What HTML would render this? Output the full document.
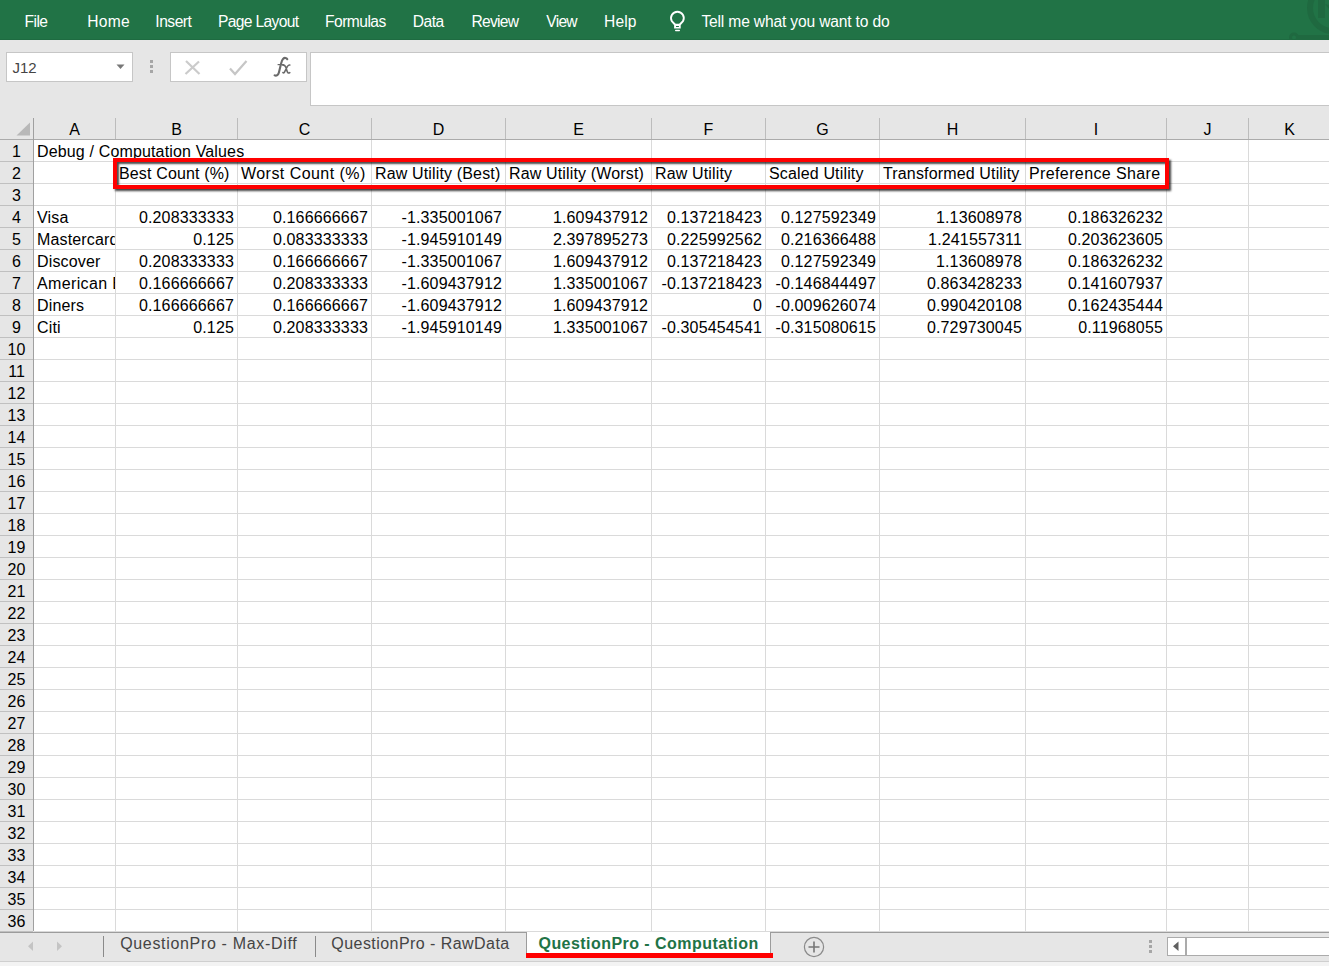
<!DOCTYPE html><html><head><meta charset="utf-8"><style>
html,body{margin:0;padding:0;}
body{width:1329px;height:966px;overflow:hidden;position:relative;background:#e6e6e6;font-family:"Liberation Sans",sans-serif;}
.a{position:absolute;white-space:nowrap;}
.rt{position:absolute;white-space:nowrap;color:#fff;font-size:15.6px;line-height:20px;top:11.5px;}
.c{position:absolute;white-space:nowrap;font-size:16px;line-height:22px;color:#000;height:22px;overflow:hidden;letter-spacing:0.15px;}
.ch{position:absolute;font-size:16px;line-height:21px;color:#000;text-align:center;top:119px;height:21px;padding-left:1px;box-sizing:border-box;}
.rh{position:absolute;font-size:16px;line-height:22px;color:#000;text-align:center;left:0;width:33px;}
</style></head><body>

<div class="a" style="left:0;top:0;width:1329px;height:40px;background:#217346;"></div>
<div class="a" style="left:0;top:39px;width:1329px;height:1px;background:#1e6b41;"></div>
<div class="rt" style="left:24.5px;letter-spacing:-0.53px;">File</div>
<div class="rt" style="left:87.3px;letter-spacing:0.27px;">Home</div>
<div class="rt" style="left:155.3px;letter-spacing:-0.48px;">Insert</div>
<div class="rt" style="left:218.1px;letter-spacing:-0.66px;">Page Layout</div>
<div class="rt" style="left:325.1px;letter-spacing:-0.54px;">Formulas</div>
<div class="rt" style="left:412.8px;letter-spacing:-0.53px;">Data</div>
<div class="rt" style="left:471.4px;letter-spacing:-0.72px;">Review</div>
<div class="rt" style="left:546.3px;letter-spacing:-0.73px;">View</div>
<div class="rt" style="left:604.1px;letter-spacing:0.07px;">Help</div>
<div class="rt" style="left:701.4px;letter-spacing:-0.16px;">Tell me what you want to do</div>
<svg class="a" style="left:660px;top:5px;" width="40" height="30" viewBox="660 5 40 30"><path d="M674.9 24.5 L671.8 21.1 A6.35 6.35 0 1 1 683.0 21.1 L679.9 24.5" fill="none" stroke="#fff" stroke-width="1.9" stroke-linejoin="round"/><path d="M674.1 23.8 H680.7 V28.6 H674.1 Z M676 25.9 V26.9 H678.9 V25.9 Z" fill="#fff" fill-rule="evenodd"/><rect x="675" y="29.7" width="5" height="1.5" rx="0.7" fill="#fff"/></svg>
<svg class="a" style="left:1280px;top:0px;" width="49" height="40" viewBox="1280 0 49 40"><circle cx="1333" cy="8" r="23" fill="none" stroke="#1f6940" stroke-width="6"/><rect x="1318" y="0" width="7" height="18" fill="#1f6940"/><path d="M1325 4 L1333 14 L1333 6 Z" fill="#1f6940"/><circle cx="1294" cy="37.5" r="3.5" fill="none" stroke="#1f6940" stroke-width="3"/><rect x="1297" y="35" width="32" height="5" fill="#1f6940"/></svg>
<div class="a" style="left:6px;top:52px;width:125px;height:28px;border:1px solid #c6c6c6;background:#fff;"></div>
<div class="a" style="left:12.5px;top:57.5px;font-size:15px;line-height:20px;color:#444;">J12</div>
<svg class="a" style="left:116px;top:64px;" width="9" height="6"><path d="M0.5 0.5 L8.5 0.5 L4.5 5 Z" fill="#777"/></svg>
<div class="a" style="left:150px;top:60px;width:3px;height:3px;background:#a6a6a6;"></div>
<div class="a" style="left:150px;top:65px;width:3px;height:3px;background:#a6a6a6;"></div>
<div class="a" style="left:150px;top:70px;width:3px;height:3px;background:#a6a6a6;"></div>
<div class="a" style="left:170px;top:52px;width:135px;height:28px;border:1px solid #c6c6c6;background:#fff;"></div>
<svg class="a" style="left:184px;top:59px;" width="18" height="17"><path d="M2 2 L15.5 15 M15 2.5 L1.5 15" stroke="#cbcbcb" stroke-width="2.2"/></svg>
<svg class="a" style="left:229px;top:60px;" width="19" height="16"><path d="M1 8.5 L6 14 L17.5 1" fill="none" stroke="#c6c6c6" stroke-width="2.2"/></svg>
<svg class="a" style="left:270px;top:54px;" width="24" height="26" viewBox="270 54 24 26"><path d="M287.3 59.2 C286.6 57.7 284.4 57.5 283.2 58.7 C282.2 59.7 281.6 61.5 281.1 63.5 L278.9 72.5 C278.3 74.8 276.6 76.2 274.6 75.4" fill="none" stroke="#6a6a6a" stroke-width="2.1" stroke-linecap="round"/><path d="M277.6 64.6 H284.2" stroke="#6a6a6a" stroke-width="1.2"/><path d="M283 65.2 C284.3 64.8 285.2 65.5 285.8 67.2 L287.2 71.5 C287.7 73 288.7 73.4 289.8 72.6 M289.8 65 C288.9 64.7 288.2 65.3 287.4 66.4 L284.6 71.8 C284 73 283.4 73.2 282.9 72.6" fill="none" stroke="#6a6a6a" stroke-width="1.6" stroke-linecap="round"/></svg>
<div class="a" style="left:310px;top:52px;width:1030px;height:52px;border:1px solid #c6c6c6;background:#fff;"></div>
<svg class="a" style="left:16px;top:122px;" width="15" height="14"><path d="M14 0.5 L14 13.5 L0.5 13.5 Z" fill="#b8b8b8"/></svg>
<div class="ch" style="left:33px;width:82px;">A</div>
<div class="a" style="left:115px;top:118px;width:1px;height:21px;background:#bcbcbc;"></div>
<div class="ch" style="left:115px;width:122px;">B</div>
<div class="a" style="left:237px;top:118px;width:1px;height:21px;background:#bcbcbc;"></div>
<div class="ch" style="left:237px;width:134px;">C</div>
<div class="a" style="left:371px;top:118px;width:1px;height:21px;background:#bcbcbc;"></div>
<div class="ch" style="left:371px;width:134px;">D</div>
<div class="a" style="left:505px;top:118px;width:1px;height:21px;background:#bcbcbc;"></div>
<div class="ch" style="left:505px;width:146px;">E</div>
<div class="a" style="left:651px;top:118px;width:1px;height:21px;background:#bcbcbc;"></div>
<div class="ch" style="left:651px;width:114px;">F</div>
<div class="a" style="left:765px;top:118px;width:1px;height:21px;background:#bcbcbc;"></div>
<div class="ch" style="left:765px;width:114px;">G</div>
<div class="a" style="left:879px;top:118px;width:1px;height:21px;background:#bcbcbc;"></div>
<div class="ch" style="left:879px;width:146px;">H</div>
<div class="a" style="left:1025px;top:118px;width:1px;height:21px;background:#bcbcbc;"></div>
<div class="ch" style="left:1025px;width:141px;">I</div>
<div class="a" style="left:1166px;top:118px;width:1px;height:21px;background:#bcbcbc;"></div>
<div class="ch" style="left:1166px;width:82px;">J</div>
<div class="a" style="left:1248px;top:118px;width:1px;height:21px;background:#bcbcbc;"></div>
<div class="ch" style="left:1248px;width:82px;">K</div>
<div class="a" style="left:1330px;top:118px;width:1px;height:21px;background:#bcbcbc;"></div>
<div class="a" style="left:33px;top:118px;width:1px;height:21px;background:#a0a0a0;"></div>
<div class="a" style="left:0;top:139px;width:1329px;height:1px;background:#ababab;"></div>
<div class="a" style="left:34px;top:140px;width:1295px;height:791px;background:#fff;"></div>
<div class="a" style="left:33px;top:139px;width:1px;height:792px;background:#a0a0a0;"></div>
<div class="a" style="left:0;top:161px;width:33px;height:1px;background:#c0c0c0;"></div>
<div class="a" style="left:34px;top:161px;width:1295px;height:1px;background:#dadada;"></div>
<div class="a" style="left:0;top:183px;width:33px;height:1px;background:#c0c0c0;"></div>
<div class="a" style="left:34px;top:183px;width:1295px;height:1px;background:#dadada;"></div>
<div class="a" style="left:0;top:205px;width:33px;height:1px;background:#c0c0c0;"></div>
<div class="a" style="left:34px;top:205px;width:1295px;height:1px;background:#dadada;"></div>
<div class="a" style="left:0;top:227px;width:33px;height:1px;background:#c0c0c0;"></div>
<div class="a" style="left:34px;top:227px;width:1295px;height:1px;background:#dadada;"></div>
<div class="a" style="left:0;top:249px;width:33px;height:1px;background:#c0c0c0;"></div>
<div class="a" style="left:34px;top:249px;width:1295px;height:1px;background:#dadada;"></div>
<div class="a" style="left:0;top:271px;width:33px;height:1px;background:#c0c0c0;"></div>
<div class="a" style="left:34px;top:271px;width:1295px;height:1px;background:#dadada;"></div>
<div class="a" style="left:0;top:293px;width:33px;height:1px;background:#c0c0c0;"></div>
<div class="a" style="left:34px;top:293px;width:1295px;height:1px;background:#dadada;"></div>
<div class="a" style="left:0;top:315px;width:33px;height:1px;background:#c0c0c0;"></div>
<div class="a" style="left:34px;top:315px;width:1295px;height:1px;background:#dadada;"></div>
<div class="a" style="left:0;top:337px;width:33px;height:1px;background:#c0c0c0;"></div>
<div class="a" style="left:34px;top:337px;width:1295px;height:1px;background:#dadada;"></div>
<div class="a" style="left:0;top:359px;width:33px;height:1px;background:#c0c0c0;"></div>
<div class="a" style="left:34px;top:359px;width:1295px;height:1px;background:#dadada;"></div>
<div class="a" style="left:0;top:381px;width:33px;height:1px;background:#c0c0c0;"></div>
<div class="a" style="left:34px;top:381px;width:1295px;height:1px;background:#dadada;"></div>
<div class="a" style="left:0;top:403px;width:33px;height:1px;background:#c0c0c0;"></div>
<div class="a" style="left:34px;top:403px;width:1295px;height:1px;background:#dadada;"></div>
<div class="a" style="left:0;top:425px;width:33px;height:1px;background:#c0c0c0;"></div>
<div class="a" style="left:34px;top:425px;width:1295px;height:1px;background:#dadada;"></div>
<div class="a" style="left:0;top:447px;width:33px;height:1px;background:#c0c0c0;"></div>
<div class="a" style="left:34px;top:447px;width:1295px;height:1px;background:#dadada;"></div>
<div class="a" style="left:0;top:469px;width:33px;height:1px;background:#c0c0c0;"></div>
<div class="a" style="left:34px;top:469px;width:1295px;height:1px;background:#dadada;"></div>
<div class="a" style="left:0;top:491px;width:33px;height:1px;background:#c0c0c0;"></div>
<div class="a" style="left:34px;top:491px;width:1295px;height:1px;background:#dadada;"></div>
<div class="a" style="left:0;top:513px;width:33px;height:1px;background:#c0c0c0;"></div>
<div class="a" style="left:34px;top:513px;width:1295px;height:1px;background:#dadada;"></div>
<div class="a" style="left:0;top:535px;width:33px;height:1px;background:#c0c0c0;"></div>
<div class="a" style="left:34px;top:535px;width:1295px;height:1px;background:#dadada;"></div>
<div class="a" style="left:0;top:557px;width:33px;height:1px;background:#c0c0c0;"></div>
<div class="a" style="left:34px;top:557px;width:1295px;height:1px;background:#dadada;"></div>
<div class="a" style="left:0;top:579px;width:33px;height:1px;background:#c0c0c0;"></div>
<div class="a" style="left:34px;top:579px;width:1295px;height:1px;background:#dadada;"></div>
<div class="a" style="left:0;top:601px;width:33px;height:1px;background:#c0c0c0;"></div>
<div class="a" style="left:34px;top:601px;width:1295px;height:1px;background:#dadada;"></div>
<div class="a" style="left:0;top:623px;width:33px;height:1px;background:#c0c0c0;"></div>
<div class="a" style="left:34px;top:623px;width:1295px;height:1px;background:#dadada;"></div>
<div class="a" style="left:0;top:645px;width:33px;height:1px;background:#c0c0c0;"></div>
<div class="a" style="left:34px;top:645px;width:1295px;height:1px;background:#dadada;"></div>
<div class="a" style="left:0;top:667px;width:33px;height:1px;background:#c0c0c0;"></div>
<div class="a" style="left:34px;top:667px;width:1295px;height:1px;background:#dadada;"></div>
<div class="a" style="left:0;top:689px;width:33px;height:1px;background:#c0c0c0;"></div>
<div class="a" style="left:34px;top:689px;width:1295px;height:1px;background:#dadada;"></div>
<div class="a" style="left:0;top:711px;width:33px;height:1px;background:#c0c0c0;"></div>
<div class="a" style="left:34px;top:711px;width:1295px;height:1px;background:#dadada;"></div>
<div class="a" style="left:0;top:733px;width:33px;height:1px;background:#c0c0c0;"></div>
<div class="a" style="left:34px;top:733px;width:1295px;height:1px;background:#dadada;"></div>
<div class="a" style="left:0;top:755px;width:33px;height:1px;background:#c0c0c0;"></div>
<div class="a" style="left:34px;top:755px;width:1295px;height:1px;background:#dadada;"></div>
<div class="a" style="left:0;top:777px;width:33px;height:1px;background:#c0c0c0;"></div>
<div class="a" style="left:34px;top:777px;width:1295px;height:1px;background:#dadada;"></div>
<div class="a" style="left:0;top:799px;width:33px;height:1px;background:#c0c0c0;"></div>
<div class="a" style="left:34px;top:799px;width:1295px;height:1px;background:#dadada;"></div>
<div class="a" style="left:0;top:821px;width:33px;height:1px;background:#c0c0c0;"></div>
<div class="a" style="left:34px;top:821px;width:1295px;height:1px;background:#dadada;"></div>
<div class="a" style="left:0;top:843px;width:33px;height:1px;background:#c0c0c0;"></div>
<div class="a" style="left:34px;top:843px;width:1295px;height:1px;background:#dadada;"></div>
<div class="a" style="left:0;top:865px;width:33px;height:1px;background:#c0c0c0;"></div>
<div class="a" style="left:34px;top:865px;width:1295px;height:1px;background:#dadada;"></div>
<div class="a" style="left:0;top:887px;width:33px;height:1px;background:#c0c0c0;"></div>
<div class="a" style="left:34px;top:887px;width:1295px;height:1px;background:#dadada;"></div>
<div class="a" style="left:0;top:909px;width:33px;height:1px;background:#c0c0c0;"></div>
<div class="a" style="left:34px;top:909px;width:1295px;height:1px;background:#dadada;"></div>
<div class="a" style="left:115px;top:161px;width:1px;height:770px;background:#dadada;"></div>
<div class="a" style="left:237px;top:161px;width:1px;height:770px;background:#dadada;"></div>
<div class="a" style="left:371px;top:140px;width:1px;height:791px;background:#dadada;"></div>
<div class="a" style="left:505px;top:140px;width:1px;height:791px;background:#dadada;"></div>
<div class="a" style="left:651px;top:140px;width:1px;height:791px;background:#dadada;"></div>
<div class="a" style="left:765px;top:140px;width:1px;height:791px;background:#dadada;"></div>
<div class="a" style="left:879px;top:140px;width:1px;height:791px;background:#dadada;"></div>
<div class="a" style="left:1025px;top:140px;width:1px;height:791px;background:#dadada;"></div>
<div class="a" style="left:1166px;top:140px;width:1px;height:791px;background:#dadada;"></div>
<div class="a" style="left:1248px;top:140px;width:1px;height:791px;background:#dadada;"></div>
<div class="rh" style="top:141px;">1</div>
<div class="rh" style="top:163px;">2</div>
<div class="rh" style="top:185px;">3</div>
<div class="rh" style="top:207px;">4</div>
<div class="rh" style="top:229px;">5</div>
<div class="rh" style="top:251px;">6</div>
<div class="rh" style="top:273px;">7</div>
<div class="rh" style="top:295px;">8</div>
<div class="rh" style="top:317px;">9</div>
<div class="rh" style="top:339px;">10</div>
<div class="rh" style="top:361px;">11</div>
<div class="rh" style="top:383px;">12</div>
<div class="rh" style="top:405px;">13</div>
<div class="rh" style="top:427px;">14</div>
<div class="rh" style="top:449px;">15</div>
<div class="rh" style="top:471px;">16</div>
<div class="rh" style="top:493px;">17</div>
<div class="rh" style="top:515px;">18</div>
<div class="rh" style="top:537px;">19</div>
<div class="rh" style="top:559px;">20</div>
<div class="rh" style="top:581px;">21</div>
<div class="rh" style="top:603px;">22</div>
<div class="rh" style="top:625px;">23</div>
<div class="rh" style="top:647px;">24</div>
<div class="rh" style="top:669px;">25</div>
<div class="rh" style="top:691px;">26</div>
<div class="rh" style="top:713px;">27</div>
<div class="rh" style="top:735px;">28</div>
<div class="rh" style="top:757px;">29</div>
<div class="rh" style="top:779px;">30</div>
<div class="rh" style="top:801px;">31</div>
<div class="rh" style="top:823px;">32</div>
<div class="rh" style="top:845px;">33</div>
<div class="rh" style="top:867px;">34</div>
<div class="rh" style="top:889px;">35</div>
<div class="rh" style="top:911px;">36</div>
<div class="c" style="left:37px;top:141px;">Debug / Computation Values</div>
<div class="c" style="left:119px;top:163px;width:118px;">Best Count (%)</div>
<div class="c" style="left:241px;top:163px;width:130px;letter-spacing:0.45px;">Worst Count (%)</div>
<div class="c" style="left:375px;top:163px;width:130px;">Raw Utility (Best)</div>
<div class="c" style="left:509px;top:163px;width:142px;">Raw Utility (Worst)</div>
<div class="c" style="left:655px;top:163px;width:110px;">Raw Utility</div>
<div class="c" style="left:769px;top:163px;width:110px;">Scaled Utility</div>
<div class="c" style="left:883px;top:163px;width:142px;">Transformed Utility</div>
<div class="c" style="left:1029px;top:163px;width:137px;letter-spacing:0.38px;">Preference Share</div>
<div class="c" style="left:37px;top:207px;width:78px;">Visa</div>
<div class="c" style="left:115px;top:207px;width:119px;text-align:right;">0.208333333</div>
<div class="c" style="left:237px;top:207px;width:131px;text-align:right;">0.166666667</div>
<div class="c" style="left:371px;top:207px;width:131px;text-align:right;">-1.335001067</div>
<div class="c" style="left:505px;top:207px;width:143px;text-align:right;">1.609437912</div>
<div class="c" style="left:651px;top:207px;width:111px;text-align:right;">0.137218423</div>
<div class="c" style="left:765px;top:207px;width:111px;text-align:right;">0.127592349</div>
<div class="c" style="left:879px;top:207px;width:143px;text-align:right;">1.13608978</div>
<div class="c" style="left:1025px;top:207px;width:138px;text-align:right;">0.186326232</div>
<div class="c" style="left:37px;top:229px;width:78px;">Mastercard</div>
<div class="c" style="left:115px;top:229px;width:119px;text-align:right;">0.125</div>
<div class="c" style="left:237px;top:229px;width:131px;text-align:right;">0.083333333</div>
<div class="c" style="left:371px;top:229px;width:131px;text-align:right;">-1.945910149</div>
<div class="c" style="left:505px;top:229px;width:143px;text-align:right;">2.397895273</div>
<div class="c" style="left:651px;top:229px;width:111px;text-align:right;">0.225992562</div>
<div class="c" style="left:765px;top:229px;width:111px;text-align:right;">0.216366488</div>
<div class="c" style="left:879px;top:229px;width:143px;text-align:right;">1.241557311</div>
<div class="c" style="left:1025px;top:229px;width:138px;text-align:right;">0.203623605</div>
<div class="c" style="left:37px;top:251px;width:78px;">Discover</div>
<div class="c" style="left:115px;top:251px;width:119px;text-align:right;">0.208333333</div>
<div class="c" style="left:237px;top:251px;width:131px;text-align:right;">0.166666667</div>
<div class="c" style="left:371px;top:251px;width:131px;text-align:right;">-1.335001067</div>
<div class="c" style="left:505px;top:251px;width:143px;text-align:right;">1.609437912</div>
<div class="c" style="left:651px;top:251px;width:111px;text-align:right;">0.137218423</div>
<div class="c" style="left:765px;top:251px;width:111px;text-align:right;">0.127592349</div>
<div class="c" style="left:879px;top:251px;width:143px;text-align:right;">1.13608978</div>
<div class="c" style="left:1025px;top:251px;width:138px;text-align:right;">0.186326232</div>
<div class="c" style="left:37px;top:273px;width:78px;letter-spacing:0.36px;">American Express</div>
<div class="c" style="left:115px;top:273px;width:119px;text-align:right;">0.166666667</div>
<div class="c" style="left:237px;top:273px;width:131px;text-align:right;">0.208333333</div>
<div class="c" style="left:371px;top:273px;width:131px;text-align:right;">-1.609437912</div>
<div class="c" style="left:505px;top:273px;width:143px;text-align:right;">1.335001067</div>
<div class="c" style="left:651px;top:273px;width:111px;text-align:right;">-0.137218423</div>
<div class="c" style="left:765px;top:273px;width:111px;text-align:right;">-0.146844497</div>
<div class="c" style="left:879px;top:273px;width:143px;text-align:right;">0.863428233</div>
<div class="c" style="left:1025px;top:273px;width:138px;text-align:right;">0.141607937</div>
<div class="c" style="left:37px;top:295px;width:78px;">Diners</div>
<div class="c" style="left:115px;top:295px;width:119px;text-align:right;">0.166666667</div>
<div class="c" style="left:237px;top:295px;width:131px;text-align:right;">0.166666667</div>
<div class="c" style="left:371px;top:295px;width:131px;text-align:right;">-1.609437912</div>
<div class="c" style="left:505px;top:295px;width:143px;text-align:right;">1.609437912</div>
<div class="c" style="left:651px;top:295px;width:111px;text-align:right;">0</div>
<div class="c" style="left:765px;top:295px;width:111px;text-align:right;">-0.009626074</div>
<div class="c" style="left:879px;top:295px;width:143px;text-align:right;">0.990420108</div>
<div class="c" style="left:1025px;top:295px;width:138px;text-align:right;">0.162435444</div>
<div class="c" style="left:37px;top:317px;width:78px;">Citi</div>
<div class="c" style="left:115px;top:317px;width:119px;text-align:right;">0.125</div>
<div class="c" style="left:237px;top:317px;width:131px;text-align:right;">0.208333333</div>
<div class="c" style="left:371px;top:317px;width:131px;text-align:right;">-1.945910149</div>
<div class="c" style="left:505px;top:317px;width:143px;text-align:right;">1.335001067</div>
<div class="c" style="left:651px;top:317px;width:111px;text-align:right;">-0.305454541</div>
<div class="c" style="left:765px;top:317px;width:111px;text-align:right;">-0.315080615</div>
<div class="c" style="left:879px;top:317px;width:143px;text-align:right;">0.729730045</div>
<div class="c" style="left:1025px;top:317px;width:138px;text-align:right;">0.11968055</div>
<div class="a" style="left:113px;top:158px;width:1048px;height:23px;border:4px solid #ff0000;box-shadow:2px 2px 2px rgba(0,0,0,0.75), inset 2px 2px 2px rgba(0,0,0,0.7);"></div>
<div class="a" style="left:0;top:931px;width:33px;height:1px;background:#c0c0c0;"></div>
<div class="a" style="left:34px;top:931px;width:1295px;height:1px;background:#dadada;"></div>
<div class="a" style="left:0;top:932px;width:1329px;height:1px;background:#9c9c9c;"></div>
<div class="a" style="left:0;top:961px;width:1329px;height:1px;background:#cfcfcf;"></div>
<div class="a" style="left:0;top:962px;width:1329px;height:4px;background:#f3f3f3;"></div>
<svg class="a" style="left:27px;top:941px;" width="8" height="11"><path d="M6 0.5 L6 10 L1 5.25 Z" fill="#c4c4c4"/></svg>
<svg class="a" style="left:56px;top:941px;" width="8" height="11"><path d="M1 0.5 L1 10 L6 5.25 Z" fill="#c4c4c4"/></svg>
<div class="a" style="left:103px;top:936px;width:1px;height:21px;background:#8a8a8a;"></div>
<div class="a" style="left:315px;top:936px;width:1px;height:21px;background:#8a8a8a;"></div>
<div class="a" style="left:120.2px;top:934px;font-size:16px;line-height:20px;color:#444;letter-spacing:0.67px;">QuestionPro - Max-Diff</div>
<div class="a" style="left:331.3px;top:934px;font-size:16px;line-height:20px;color:#444;letter-spacing:0.45px;">QuestionPro - RawData</div>
<div class="a" style="left:526px;top:932px;width:243px;height:21px;background:#fff;border-left:1px solid #9c9c9c;border-right:1px solid #9c9c9c;"></div>
<div class="a" style="left:538.5px;top:934px;font-size:16px;line-height:20px;font-weight:bold;color:#217346;letter-spacing:0.45px;">QuestionPro - Computation</div>
<div class="a" style="left:526px;top:953px;width:247px;height:5px;background:#ff0000;"></div>
<svg class="a" style="left:803px;top:936px;" width="22" height="22"><circle cx="11" cy="11" r="9.6" fill="none" stroke="#8a8a8a" stroke-width="1.2"/><path d="M11 5.5 V16.5 M5.5 11 H16.5" stroke="#777" stroke-width="1.6"/></svg>
<div class="a" style="left:1149px;top:940px;width:3px;height:3px;background:#a6a6a6;"></div>
<div class="a" style="left:1149px;top:945px;width:3px;height:3px;background:#a6a6a6;"></div>
<div class="a" style="left:1149px;top:950px;width:3px;height:3px;background:#a6a6a6;"></div>
<div class="a" style="left:1167px;top:937px;width:170px;height:17px;border:1px solid #ababab;background:#fff;"></div>
<div class="a" style="left:1185px;top:938px;width:2px;height:17px;background:#ababab;"></div>
<svg class="a" style="left:1172px;top:941px;" width="8" height="11"><path d="M6.5 0.5 L6.5 10 L1 5.25 Z" fill="#606060"/></svg>
</body></html>
